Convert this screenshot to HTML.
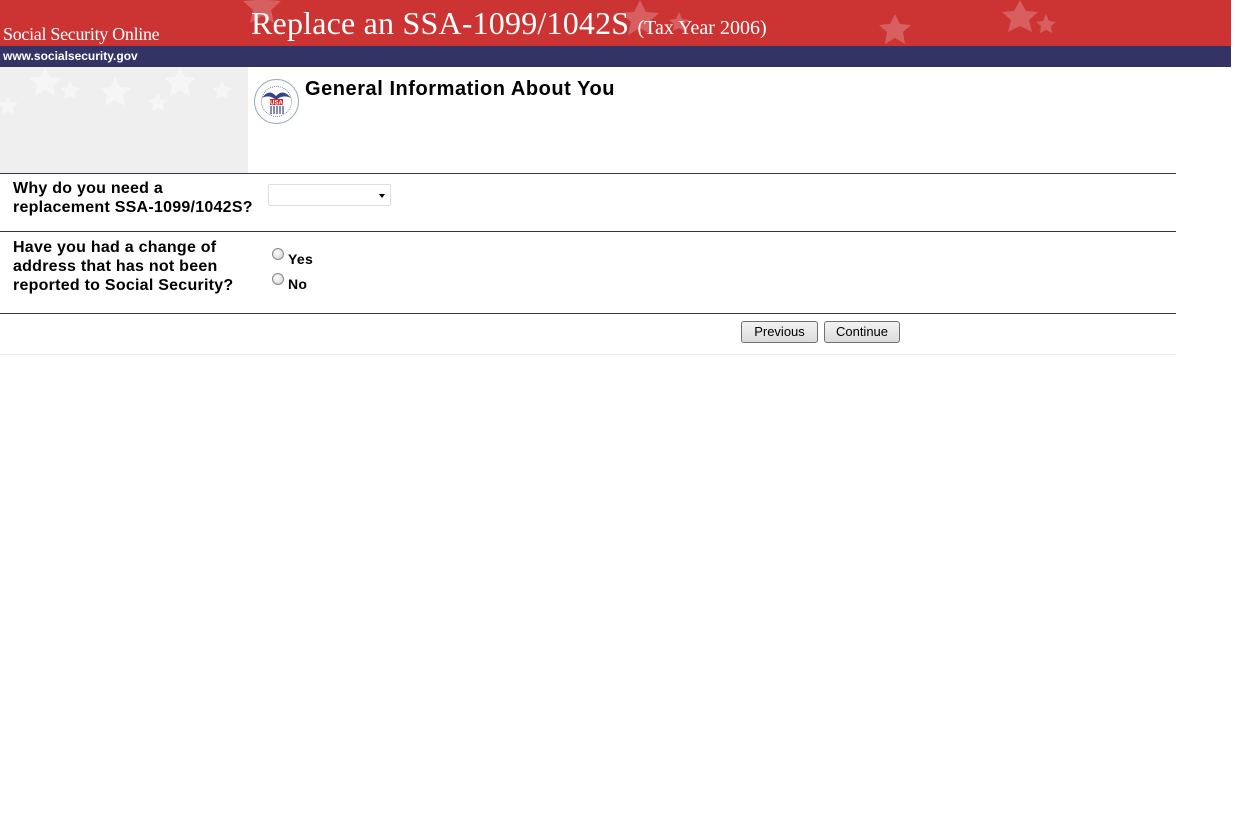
<!DOCTYPE html>
<html><head><meta charset="utf-8"><style>
body{margin:0;background:#fff;font-family:"Liberation Sans",Arial,sans-serif;}
.abs{position:absolute}
.b{font-weight:bold;font-size:16px;color:#000;line-height:19px;letter-spacing:0.25px}
.btn{position:absolute;top:321px;height:22px;border:1px solid #707070;border-radius:3px;background:linear-gradient(#f2f2f2,#dcdcdc);font-size:13px;text-align:center;line-height:20px;box-sizing:border-box;color:#000}
.radio{position:absolute;width:12px;height:12px;border-radius:50%;border:1px solid #888;background:radial-gradient(circle at 40% 40%,#fff,#ccc);box-sizing:border-box}
</style></head><body>
<div class="abs" style="left:0;top:0;width:1231px;height:46px;background:#cc3333;overflow:hidden">
<svg width="1231" height="46" style="position:absolute;left:0;top:0">
<g fill="#fff" fill-opacity="0.22">
<polygon points="262,0 268,12 281,13 271,22 274,35 262,28 250,35 253,22 243,13 256,12" transform="translate(0,-12)"/>
<polygon points="660,0 666,12 679,13 669,22 672,35 660,28 648,35 651,22 641,13 654,12" transform="translate(-20,0)"/>
<polygon points="895,14 900,24 911,25 903,32 905,44 895,38 885,44 887,32 879,25 890,24"/>
<polygon points="1020,0 1026,11 1038,12 1029,20 1032,32 1020,26 1008,32 1011,20 1002,12 1014,11"/>
<polygon points="1046,14 1049,21 1056,22 1051,26 1052,33 1046,30 1040,33 1041,26 1036,22 1043,21"/>
<polygon points="679,12 682,19 689,20 684,24 685,31 679,28 673,31 674,24 669,20 676,19"/>
</g></svg>
<div class="abs" style="left:3px;top:24px;color:#fff;font-family:'Liberation Serif',serif;font-size:18px;letter-spacing:-0.3px">Social Security Online</div>
<div class="abs" style="left:251px;top:5px;color:#fff;font-family:'Liberation Serif',serif;font-size:32px;white-space:nowrap;letter-spacing:0.2px">Replace an SSA-1099/1042S <span style="font-size:20px;letter-spacing:0">(Tax Year 2006)</span></div>
</div>
<div class="abs" style="left:0;top:46px;width:1231px;height:21px;background:#333366;color:#fff;font-size:12px;font-weight:bold;line-height:21px;padding-left:3px;box-sizing:border-box">www.socialsecurity.gov</div>
<div class="abs" style="left:0;top:67px;width:248px;height:106px;background:#efefef;overflow:hidden">
<svg width="248" height="60"><g fill="#fff" fill-opacity="0.45">
<polygon points="45,0 50,10 61,11 53,18 55,29 45,23 35,29 37,18 29,11 40,10"/>
<polygon points="115,10 120,20 131,21 123,28 125,39 115,33 105,39 107,28 99,21 110,20"/>
<polygon points="158,26 161,32 168,33 163,37 164,44 158,41 152,44 153,37 148,33 155,32"/>
<polygon points="70,14 73,20 80,21 75,25 76,32 70,29 64,32 65,25 60,21 67,20"/>
<polygon points="180,0 185,10 196,11 188,18 190,29 180,23 170,29 172,18 164,11 175,10"/>
<polygon points="222,14 225,20 232,21 227,25 228,32 222,29 216,32 217,25 212,21 219,20"/>
<polygon points="8,29 11,35 18,36 13,40 14,47 8,44 2,47 3,40 -2,36 5,35"/>
</g></svg></div>
<svg class="abs" style="left:253px;top:78px" width="47" height="47" viewBox="0 0 47 47">
<circle cx="23.5" cy="23.5" r="22" fill="none" stroke="#9ab" stroke-width="1"/>
<circle cx="23.5" cy="23.5" r="15" fill="none" stroke="#345" stroke-width="0.6" stroke-dasharray="1 1"/>
<path d="M9 20 Q16 10 23 18 Q30 10 38 20 Q30 16 23 22 Q16 16 9 20Z" fill="#334488"/>
<rect x="17" y="21" width="13" height="6" fill="#d22"/>
<text x="23.5" y="26.5" font-size="6" font-weight="bold" fill="#fff" text-anchor="middle" font-family="Liberation Sans">USA</text>
<g stroke="#334488" stroke-width="1.2"><line x1="18" y1="28" x2="18" y2="36"/><line x1="21" y1="28" x2="21" y2="36"/><line x1="24" y1="28" x2="24" y2="36"/><line x1="27" y1="28" x2="27" y2="36"/><line x1="30" y1="28" x2="30" y2="36"/></g>
</svg>
<div class="abs" style="left:305px;top:78px;font-size:20px;font-weight:bold;letter-spacing:0.55px">General Information About You</div>
<div class="abs" style="left:0;top:173px;width:1176px;height:1px;background:#333355"></div>
<div class="abs" style="left:0;top:231px;width:1176px;height:1px;background:#333355"></div>
<div class="abs" style="left:0;top:313px;width:1176px;height:1px;background:#333355"></div>
<div class="abs" style="left:0;top:354px;width:1176px;height:1px;background:#eee"></div>
<div class="abs b" style="left:13px;top:179px">Why do you need a<br>replacement SSA-1099/1042S?</div>
<div class="abs" style="left:268px;top:184px;width:123px;height:22px;border:1px solid #ddd;box-sizing:border-box;border-radius:2px"><div style="position:absolute;right:5px;top:9px;border-left:3px solid transparent;border-right:3px solid transparent;border-top:4px solid #000"></div></div>
<div class="abs b" style="left:13px;top:238px">Have you had a change of<br>address that has not been<br>reported to Social Security?</div>
<div class="radio" style="left:272px;top:248px"></div>
<div class="abs" style="left:288px;top:251px;font-size:14px;font-weight:bold;letter-spacing:0.3px">Yes</div>
<div class="radio" style="left:272px;top:273px"></div>
<div class="abs" style="left:288px;top:276px;font-size:14px;font-weight:bold;letter-spacing:0.3px">No</div>
<div class="btn" style="left:741px;width:77px">Previous</div>
<div class="btn" style="left:824px;width:76px">Continue</div>
</body></html>
